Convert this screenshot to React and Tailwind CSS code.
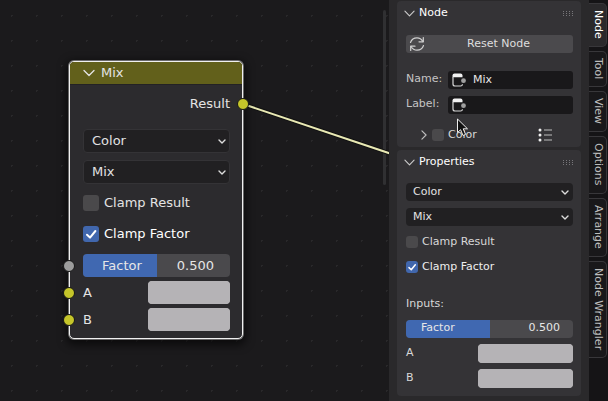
import React, { useState } from "react";

const Chevron = ({ className }) => (
  <svg viewBox="0 0 12 12" className={className} fill="none" stroke="currentColor" strokeLinecap="round" strokeLinejoin="round">
    <path d="M1 3.5 6 8.5 11 3.5" />
  </svg>
);

const SelectArrow = () => (
  <svg viewBox="0 0 10 10" className="pointer-events-none absolute top-1/2 right-[3px] size-[10px] -translate-y-1/2" fill="none" stroke="#dddddd" strokeWidth="1.4" strokeLinecap="round" strokeLinejoin="round">
    <path d="M2 4 5 7 8 4" />
  </svg>
);

function Select({ label, value, options, className }) {
  return (
    <div className="relative flex w-full">
      <select
        aria-label={label}
        defaultValue={value}
        className={"w-full appearance-none rounded-[4px] bg-[#212022] text-[#e2e2e2] outline-none " + className}
      >
        {options.map((o) => (
          <option key={o}>{o}</option>
        ))}
      </select>
      <SelectArrow />
    </div>
  );
}

function CheckBox({ boxClass, ...props }) {
  return (
    <span className="relative flex">
      <input type="checkbox" className={"peer appearance-none rounded-[3px] bg-[#4a494b] checked:bg-[#4167ad] " + boxClass} {...props} />
      <svg viewBox="0 0 16 16" className="pointer-events-none absolute inset-0 hidden size-full peer-checked:block" fill="none" stroke="#ffffff" strokeWidth="2" strokeLinecap="round" strokeLinejoin="round">
        <path d="M4 8.8 7 11.6 12.4 5" />
      </svg>
    </span>
  );
}

function FactorSlider({ className, labelClass, valueClass, value, onChange }) {
  return (
    <label className={"relative flex w-full items-center justify-between overflow-hidden rounded-[4px] bg-[#4a494c] text-[#e6e6e6] " + className}>
      <span className="absolute inset-y-0 left-0 bg-[#4068b1]" style={{ width: value * 100 + "%" }} />
      <span className={"relative " + labelClass}>Factor</span>
      <span className={"relative " + valueClass}>{value.toFixed(3)}</span>
      <input
        type="range"
        min="0"
        max="1"
        step="0.001"
        value={value}
        onChange={(e) => onChange(Number(e.target.value))}
        className="absolute inset-0 size-full opacity-0"
      />
    </label>
  );
}

function ColorRow({ label, className, swatchClass }) {
  return (
    <label className={"flex items-center justify-between " + className}>
      {label}
      <input
        type="color"
        defaultValue="#b5b3b6"
        className={"appearance-none rounded-[4px] bg-[#b5b3b6] [&::-webkit-color-swatch]:rounded-[4px] [&::-webkit-color-swatch]:border-0 [&::-webkit-color-swatch-wrapper]:p-0 " + swatchClass}
      />
    </label>
  );
}

function Socket({ className }) {
  return <span className={"absolute size-[12px] -translate-y-1/2 rounded-full border border-[#161616] " + className} />;
}

function MixNode({ factor, setFactor }) {
  return (
    <section className="absolute top-[61px] left-[69px] w-[174px] rounded-[5px] border border-[#f0f0f0] bg-[#2c2b2e] text-[13px] text-[#e4e4e4] shadow-[0_0_0_1px_rgba(240,240,240,0.4),0_3px_8px_3px_rgba(0,0,0,0.6)]">
      <header className="flex h-[23px] items-center gap-[6px] rounded-t-[4px] border-b border-[#232224] bg-[#62601b] pl-[13px]">
        <Chevron className="size-[12px] stroke-[1.3]" />
        <h2>Mix</h2>
      </header>
      <div className="relative flex h-[37px] items-center justify-end pr-[12px]">
        Result
        <Socket className="top-1/2 -right-[7px] bg-[#c5c52a]" />
      </div>
      <div className="flex flex-col gap-[7px] pt-[7px] pr-[12px] pl-[13px]">
        <Select label="Data type" value="Color" options={["Color", "Float", "Vector"]} className="h-[24px] border border-[#343336] pl-[8px]" />
        <Select label="Blend mode" value="Mix" options={["Mix", "Add", "Multiply"]} className="h-[24px] border border-[#343336] pl-[8px]" />
        <label className="flex h-[24px] items-center gap-[5px]">
          <CheckBox boxClass="size-[16px]" />
          Clamp Result
        </label>
        <label className="flex h-[24px] items-center gap-[5px] text-white">
          <CheckBox boxClass="size-[16px]" defaultChecked />
          Clamp Factor
        </label>
      </div>
      <div className="relative mt-[6px] flex h-[27px] items-center pr-[12px] pl-[13px]">
        <Socket className="top-1/2 -left-[7px] bg-[#9c9c9c]" />
        <FactorSlider className="h-[23px]" labelClass="pl-[19px]" valueClass="pr-[16px]" value={factor} onChange={setFactor} />
      </div>
      {["A", "B"].map((name) => (
        <div key={name} className="relative">
          <Socket className="top-1/2 -left-[7px] bg-[#c5c52a]" />
          <ColorRow label={name} className="h-[27px] pr-[12px] pl-[13px]" swatchClass="h-[23px] w-[82px]" />
        </div>
      ))}
      <div className="h-[5px]" />
    </section>
  );
}

function Grip() {
  return (
    <svg viewBox="0 0 12 5" className="h-[5px] w-[12px]" fill="#77767a" shapeRendering="crispEdges">
      {[0, 3, 6, 9].flatMap((x) => [0, 2, 4].map((y) => <rect key={x + "-" + y} x={x} y={y} width="1" height="1" />))}
    </svg>
  );
}

function Panel({ title, children }) {
  return (
    <section className="rounded-[4px] bg-[#343336]">
      <header className="flex h-[25px] items-center pr-[6px] pl-[7px]">
        <Chevron className="size-[11px] stroke-[1.2] text-[#cccccc]" />
        <h2 className="ml-[4px] flex-1 text-white">{title}</h2>
        <Grip />
      </header>
      <div className="pr-[8px] pl-[9px]">{children}</div>
    </section>
  );
}

function NodeIcon() {
  return (
    <svg viewBox="0 0 15 14" className="pointer-events-none absolute top-1/2 left-[4px] h-[14px] w-[15px] -translate-y-1/2">
      <path d="M.5 4.200V2.500Q.5.5 2.500.5H8.500Q10.500.5 10.500 2.500V4.200Z" fill="#f2f2f2" />
      <path d="M1 4V11Q1 13 3 13H8.500Q10.300 13 10.500 11.300" fill="none" stroke="#d8d8d8" strokeWidth="1.200" />
      <circle cx="11.500" cy="7.700" r="2.400" fill="#a0a0a0" />
    </svg>
  );
}

function TextField({ label, value }) {
  return (
    <label className="flex h-[25px] items-center text-[#c4c4c4]">
      <span className="w-[42px]">{label}</span>
      <span className="relative flex flex-1">
        <NodeIcon />
        <input type="text" defaultValue={value} className="h-[18px] w-full min-w-0 rounded-[3px] bg-[#19181a] pl-[25px] text-[#e6e6e6] outline-none" />
      </span>
    </label>
  );
}

function Sidebar({ factor, setFactor }) {
  return (
    <aside className="flex w-[200px] shrink-0 flex-col gap-[3px] bg-[#2a292b] px-[8px] pt-px text-[11px] text-[#d8d8d8]">
      <Panel title="Node">
        <div className="flex h-[30px] items-end pb-[3px]">
          <button className="relative flex h-[18px] w-full items-center justify-center rounded-[3px] bg-[#4b4a4d] pl-[18px] text-[#dedede]">
            <svg viewBox="0 0 16 16" className="absolute left-[3px] size-[16px]" fill="none" stroke="#d0d0d0" strokeWidth="1.200" strokeLinecap="round" strokeLinejoin="round">
              <path d="M1.500 6.500C2.500 3.500 5 1.800 8 1.800C10.500 1.800 12.500 3 14 5.500" />
              <path d="M14.300 1.500V5.800H10" />
              <path d="M14.500 9.500C13.500 12.500 11 14.200 8 14.200C5.500 14.200 3.500 13 2 10.500" />
              <path d="M1.700 14.500V10.200H6" />
            </svg>
            Reset Node
          </button>
        </div>
        <div className="pt-[11px]">
          <TextField label="Name:" value="Mix" />
          <TextField label="Label:" value="" />
        </div>
        <div className="flex h-[30px] items-center pt-[6px] pl-[13px]">
          <button aria-label="Expand color" className="flex">
            <Chevron className="size-[10px] -rotate-90 stroke-[1.4] text-[#bbbbbb]" />
          </button>
          <label className="ml-[3px] flex flex-1 items-center gap-[4px]">
            <CheckBox boxClass="size-[12px]" />
            Color
          </label>
          <button aria-label="Color presets" className="mr-[20px] flex">
            <svg viewBox="0 0 15 14" className="h-[14px] w-[15px]">
              {[2, 7, 12].map((y) => (
                <g key={y}>
                  <circle cx="2" cy={y} r="1.500" fill="#f0f0f0" />
                  <path d={`M6 ${y}H14`} stroke="#a8a8a8" strokeWidth="1.200" />
                </g>
              ))}
            </svg>
          </button>
        </div>
      </Panel>
      <Panel title="Properties">
        <div className="flex flex-col gap-[7px] pt-[8px]">
          <Select label="Data type" value="Color" options={["Color", "Float", "Vector"]} className="h-[18px] pl-[7px]" />
          <Select label="Blend mode" value="Mix" options={["Mix", "Add", "Multiply"]} className="h-[18px] pl-[7px]" />
          <label className="flex h-[18px] items-center gap-[4px]">
            <CheckBox boxClass="size-[12px]" />
            Clamp Result
          </label>
          <label className="flex h-[18px] items-center gap-[4px] text-[#eeeeee]">
            <CheckBox boxClass="size-[12px]" defaultChecked />
            Clamp Factor
          </label>
        </div>
        <p className="flex h-[40px] items-end pb-[4px]">Inputs:</p>
        <div className="flex h-[25px] items-center">
          <FactorSlider className="h-[18px]" labelClass="pl-[15px]" valueClass="pr-[13px]" value={factor} onChange={setFactor} />
        </div>
        <ColorRow label="A" className="h-[25px]" swatchClass="h-[19px] w-[95px]" />
        <ColorRow label="B" className="h-[25px]" swatchClass="h-[19px] w-[95px]" />
        <div className="h-[5px]" />
      </Panel>
    </aside>
  );
}

const TABS = ["Node", "Tool", "View", "Options", "Arrange", "Node Wrangler"];

function Tabs() {
  const [active, setActive] = useState("Node");
  return (
    <nav className="flex w-[19px] shrink-0 flex-col gap-[4px] bg-[#151416] pt-[3px] pr-px text-[11px]">
      {TABS.map((t) => (
        <button
          key={t}
          onClick={() => setActive(t)}
          className={
            "flex w-full items-center justify-center rounded-r-[5px] border border-l-0 border-[#38373a] pt-[6px] pb-[7px] whitespace-nowrap [writing-mode:vertical-rl] " +
            (t === active ? "bg-[#2a292b] text-white" : "bg-[#19181a] text-[#bdbdbd]")
          }
        >
          {t}
        </button>
      ))}
    </nav>
  );
}

export default function App() {
  const [factor, setFactor] = useState(0.5);
  return (
    <div className="flex h-screen overflow-hidden bg-[#1b1a1c] font-['DejaVu_Sans',sans-serif]">
      <main className="relative flex-1 overflow-hidden bg-[radial-gradient(circle,#29282a_1px,transparent_1px)] bg-[size:25px_25px] bg-[position:-1px_3px]">
        <div className="absolute top-[10px] right-[3px] h-[175px] w-[3px] rounded-full bg-[#303032]" />
        <svg className="absolute inset-0 size-full" fill="none">
          <path d="M243 104 390 153.500" stroke="#111111" strokeWidth="4" />
          <path d="M243 104 390 153.500" stroke="#e9e9b4" strokeWidth="2" />
        </svg>
        <MixNode factor={factor} setFactor={setFactor} />
      </main>
      <Sidebar factor={factor} setFactor={setFactor} />
      <Tabs />
      <svg viewBox="0 0 14 20" className="pointer-events-none absolute top-[118px] left-[456px] h-[20px] w-[14px]">
        <path d="M1.500 1V14.500L4.600 11.700 7 17.500 9.600 16.400 7.200 10.800H11.500Z" fill="#111111" stroke="#eeeeee" strokeWidth="1" strokeLinejoin="round" />
      </svg>
    </div>
  );
}
